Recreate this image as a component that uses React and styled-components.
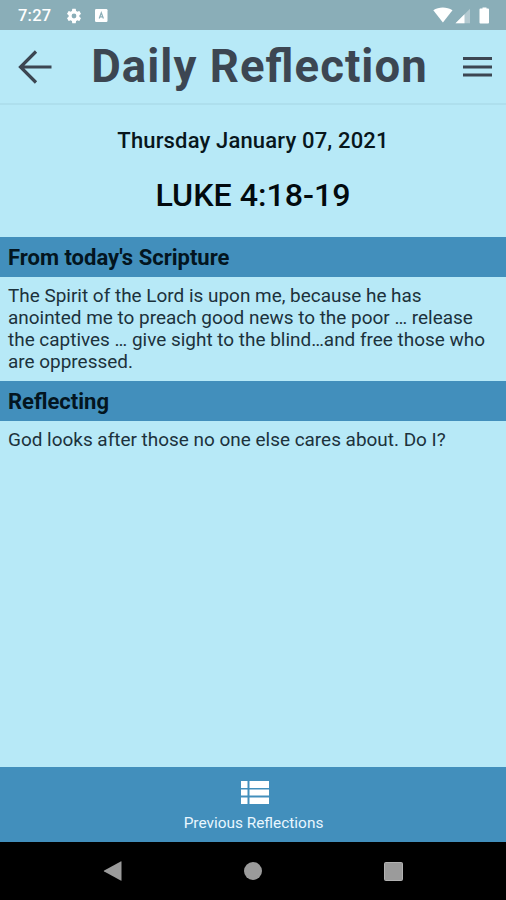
import React from 'react';
import styled, { createGlobalStyle } from 'styled-components';

const GlobalStyle = createGlobalStyle`
  * {
    box-sizing: border-box;
    margin: 0;
    padding: 0;
  }
  body {
    background: #b7e9f7;
    font-family: Roboto, 'Liberation Sans', sans-serif;
  }
  svg {
    display: block;
    flex: none;
  }
`;

const Screen = styled.div`
  display: flex;
  flex-direction: column;
  height: 100vh;
  background: #b7e9f7;
  overflow: hidden;
`;

const StatusBar = styled.div`
  display: flex;
  align-items: center;
  flex: none;
  height: 30px;
  padding: 1px 14px 0 18px;
  background: #8aaeb8;
  color: #fff;
  .time {
    width: 47px;
    font-size: 16.5px;
    font-weight: 500;
    letter-spacing: 0.2px;
  }
  .debug {
    margin-left: 12px;
  }
  .signals {
    display: flex;
    align-items: center;
    margin-left: auto;
  }
`;

const Header = styled.header`
  display: flex;
  align-items: center;
  justify-content: space-between;
  flex: none;
  height: 75px;
  padding: 0 14px 0 18px;
  border-bottom: 2px solid #aedfed;
  color: #3c4652;
`;

const Title = styled.h1`
  padding-left: 4px;
  font-size: 45.5px;
  font-weight: 700;
  line-height: 56px;
  letter-spacing: 1.050px;
  font-feature-settings: 'liga' 1;
  white-space: nowrap;
`;

const IconButton = styled.button`
  border: none;
  background: none;
  color: inherit;
`;

const Content = styled.main`
  flex: 1;
`;

const DateLine = styled.p`
  padding-top: 22px;
  font-size: 22px;
  font-weight: 500;
  line-height: 28px;
  letter-spacing: 0.16px;
  text-align: center;
  color: #08161c;
`;

const Verse = styled.h2`
  padding: 20px 0 22px;
  font-size: 32.2px;
  font-weight: 500;
  line-height: 40px;
  text-align: center;
  color: #020a0e;
`;

const SectionHeading = styled.h3`
  height: 40px;
  padding-left: 8px;
  background: #428fbc;
  font-size: 22px;
  font-weight: 700;
  line-height: 41px;
  color: #031520;
`;

const SectionText = styled.p`
  padding: 8px 8px 7.5px;
  font-size: 18.95px;
  line-height: 22px;
  color: #1c323c;
`;

const Footer = styled.footer`
  display: flex;
  flex-direction: column;
  align-items: center;
  flex: none;
  height: 75px;
  padding: 14px 0 0 1px;
  background: #428fbc;
  color: #fff;
  svg {
    margin-left: 3px;
  }
  span {
    margin-top: 10px;
    font-size: 15.4px;
    line-height: 18px;
    color: #e9f7ff;
  }
`;

const NavBar = styled.nav`
  display: flex;
  align-items: center;
  justify-content: space-between;
  flex: none;
  height: 58px;
  padding: 0 103px;
  background: #000;
  color: #9b9b9b;
`;

const sections = [
  {
    title: "From today's Scripture",
    lines: [
      'The Spirit of the Lord is upon me, because he has',
      'anointed me to preach good news to the poor … release',
      'the captives … give sight to the blind…and free those who',
      'are oppressed.',
    ],
  },
  {
    title: 'Reflecting',
    lines: ['God looks after those no one else cares about. Do I?'],
  },
];

function GearIcon() {
  return (
    <svg width="18" height="18" viewBox="0 0 24 24" fill="currentColor">
      <path d="M19.14 12.94c.04-.3.06-.61.06-.94 0-.32-.02-.64-.07-.94l2.03-1.58a.49.49 0 0 0 .12-.61l-1.92-3.32a.49.49 0 0 0-.59-.22l-2.39.96c-.5-.38-1.03-.7-1.62-.94l-.36-2.54a.48.48 0 0 0-.48-.41h-3.84a.47.47 0 0 0-.47.41l-.36 2.54c-.59.24-1.13.57-1.62.94l-2.39-.96a.48.48 0 0 0-.59.22L2.74 8.87a.47.47 0 0 0 .12.61l2.03 1.58c-.05.3-.09.63-.09.94s.02.64.07.94l-2.03 1.58a.49.49 0 0 0-.12.61l1.92 3.32c.12.22.37.29.59.22l2.39-.96c.5.38 1.03.7 1.62.94l.36 2.54c.05.24.24.41.48.41h3.84c.24 0 .44-.17.47-.41l.36-2.54c.59-.24 1.13-.56 1.62-.94l2.39.96c.22.08.47 0 .59-.22l1.92-3.32a.47.47 0 0 0-.12-.61l-2.01-1.58zM12 15.2A3.2 3.2 0 1 1 12 8.8a3.2 3.2 0 0 1 0 6.400z" />
    </svg>
  );
}

function DebugIcon() {
  return (
    <svg className="debug" width="13" height="13" viewBox="0 0 13 13">
      <rect width="12.5" height="13" rx="1.2" fill="#fff" />
      <path d="M4.2 9.5 6.3 3.8 8.4 9.5M5 7.8h2.6" fill="none" stroke="#8aaeb8" strokeWidth="1.2" />
    </svg>
  );
}

function SignalIcons() {
  return (
    <svg width="59" height="18" viewBox="0 0 59 18">
      <path d="M.3 3.2C5.800-.3 13.800-.3 19.500 3.200L9.900 15.600z" fill="#fff" />
      <path d="M37 1.800V16.300H22.500z" fill="#b3c9d0" />
      <path d="M31.500 7.300v9h-9z" fill="#fff" />
      <path d="M49.500 1.500v-1h4v1h1.600q.9 0 .9.900v13.200q0 .9-.9.900h-7.700q-.9 0-.9-.9V2.400q0-.9.900-.9z" fill="#fff" />
    </svg>
  );
}

export default function App() {
  return (
    <>
      <GlobalStyle />
      <Screen>
        <StatusBar>
          <span className="time">7:27</span>
          <GearIcon />
          <DebugIcon />
          <div className="signals">
            <SignalIcons />
          </div>
        </StatusBar>
        <Header>
          <IconButton aria-label="Back">
            <svg width="34" height="34" viewBox="0 0 34 34" fill="none" stroke="currentColor" strokeWidth="3.2">
              <path d="M33.500 17H3M18 1.500 2.500 17 18 32.500" />
            </svg>
          </IconButton>
          <Title>Daily Reflection</Title>
          <IconButton aria-label="Menu">
            <svg width="29" height="22" viewBox="0 0 29 22" fill="currentColor">
              <path d="M0 1h29v3H0zM0 9.500h29v3H0zM0 17.500h29v3H0z" />
            </svg>
          </IconButton>
        </Header>
        <Content>
          <DateLine>Thursday January 07, 2021</DateLine>
          <Verse>LUKE 4:18-19</Verse>
          {sections.map((section) => (
            <section key={section.title}>
              <SectionHeading>{section.title}</SectionHeading>
              <SectionText>
                {section.lines.map((line, i) => (
                  <React.Fragment key={line}>
                    {i > 0 && <br />}
                    {line}
                  </React.Fragment>
                ))}
              </SectionText>
            </section>
          ))}
        </Content>
        <Footer>
          <svg width="28" height="23" viewBox="0 0 28 23" fill="currentColor">
            <path d="M0 0h6.500v7H0zM8.500 0H28v7H8.500zM0 8.500h6.500v6H0zM8.500 8.500H28v6H8.500zM0 16.500h6.500V23H0zM8.500 16.500H28V23H8.500z" />
          </svg>
          <span>Previous Reflections</span>
        </Footer>
        <NavBar>
          <svg width="19" height="20" viewBox="0 0 19 20" fill="currentColor">
            <path d="M18.500.8v18.400q0 .8-.8.400L1.200 10.600q-1-.6 0-1.200L17.700.4q.8-.4.8.4z" />
          </svg>
          <svg width="18" height="18" viewBox="0 0 18 18" fill="currentColor">
            <circle cx="9" cy="9" r="9" />
          </svg>
          <svg width="19" height="19" viewBox="0 0 19 19">
            <rect x=".5" y=".5" width="18" height="18" rx="1" fill="#9b9b9b" stroke="#b2b2b2" />
          </svg>
        </NavBar>
      </Screen>
    </>
  );
}
